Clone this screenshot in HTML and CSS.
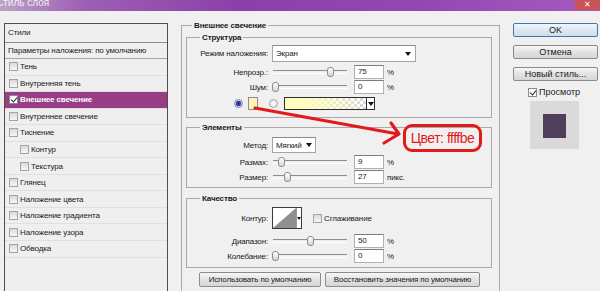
FILE: index.html
```html
<!DOCTYPE html>
<html lang="ru">
<head>
    <meta charset="UTF-8">
    <meta name="viewport" content="width=device-width, initial-scale=1.0">
    <title>Стиль слоя</title>
    <link rel="stylesheet" href="styles.css">
</head>
<body>
    <div class="titlebar">
        <span class="title-text">Стиль слоя</span>
        <span class="close-btn">✕</span>
    </div>

    <div class="dialog">
        <div class="styles-panel">
            <div class="panel-head">Стили</div>
            <div class="panel-blend">Параметры наложения: по умолчанию</div>
            <div class="panel-row"><span class="cb"></span>Тень</div>
            <div class="panel-row"><span class="cb"></span>Внутренняя тень</div>
            <div class="panel-row selected"><span class="cb on"></span>Внешнее свечение</div>
            <div class="panel-row"><span class="cb"></span>Внутреннее свечение</div>
            <div class="panel-row"><span class="cb"></span>Тиснение</div>
            <div class="panel-row sub"><span class="cb"></span>Контур</div>
            <div class="panel-row sub"><span class="cb"></span>Текстура</div>
            <div class="panel-row"><span class="cb"></span>Глянец</div>
            <div class="panel-row"><span class="cb"></span>Наложение цвета</div>
            <div class="panel-row"><span class="cb"></span>Наложение градиента</div>
            <div class="panel-row"><span class="cb"></span>Наложение узора</div>
            <div class="panel-row"><span class="cb"></span>Обводка</div>
        </div>

        <div class="settings">
            <fieldset class="group outer">
                <legend>Внешнее свечение</legend>

                <fieldset class="group structure">
                    <legend>Структура</legend>
                    <div class="row select-row">
                        <span class="lbl">Режим наложения:</span>
                        <div class="select blend-mode">Экран<span class="caret"></span></div>
                    </div>
                    <div class="row slider-row first">
                        <span class="lbl">Непрозр.:</span>
                        <div class="slider"><span class="thumb" style="left: 55px"></span></div>
                        <div class="field">75</div>
                        <span class="unit">%</span>
                    </div>
                    <div class="row slider-row">
                        <span class="lbl">Шум:</span>
                        <div class="slider"><span class="thumb" style="left: 0px"></span></div>
                        <div class="field">0</div>
                        <span class="unit">%</span>
                    </div>
                    <div class="row color-row">
                        <span class="radio on"></span>
                        <span class="swatch"></span>
                        <span class="radio"></span>
                        <div class="gradient-pick"><span class="gradient-fill"></span><span class="gradient-arrow"><span class="caret"></span></span></div>
                    </div>
                </fieldset>

                <fieldset class="group elements">
                    <legend>Элементы</legend>
                    <div class="row method-row">
                        <span class="lbl">Метод:</span>
                        <div class="select method">Мягкий<span class="caret"></span></div>
                    </div>
                    <div class="row slider-row first">
                        <span class="lbl">Размах:</span>
                        <div class="slider"><span class="thumb" style="left: 6px"></span></div>
                        <div class="field">9</div>
                        <span class="unit">%</span>
                    </div>
                    <div class="row slider-row">
                        <span class="lbl">Размер:</span>
                        <div class="slider"><span class="thumb" style="left: 12px"></span></div>
                        <div class="field">27</div>
                        <span class="unit">пикс.</span>
                    </div>
                </fieldset>

                <fieldset class="group quality">
                    <legend>Качество</legend>
                    <div class="row contour-row">
                        <span class="lbl">Контур:</span>
                        <div class="contour-pick">
                            <svg width="23" height="20" viewBox="0 0 23 20">
                                <rect x="0" y="0" width="23" height="20" fill="#fff"/>
                                <polygon points="0,20 23,0 23,20" fill="#8f8f8f"/>
                            </svg>
                            <span class="contour-arrow"><span class="caret small"></span></span>
                        </div>
                        <span class="cb smooth"></span>
                        <span class="smooth-label">Сглаживание</span>
                    </div>
                    <div class="row slider-row spaced">
                        <span class="lbl">Диапазон:</span>
                        <div class="slider"><span class="thumb" style="left: 35px"></span></div>
                        <div class="field">50</div>
                        <span class="unit">%</span>
                    </div>
                    <div class="row slider-row">
                        <span class="lbl">Колебание:</span>
                        <div class="slider"><span class="thumb" style="left: 0px"></span></div>
                        <div class="field">0</div>
                        <span class="unit">%</span>
                    </div>
                </fieldset>

                <div class="defaults">
                    <button class="btn use-default">Использовать по умолчанию</button>
                    <button class="btn reset-default">Восстановить значения по умолчанию</button>
                </div>
            </fieldset>
        </div>

        <div class="actions">
            <button class="btn action primary">OK</button>
            <button class="btn action">Отмена</button>
            <button class="btn action">Новый стиль...</button>
            <div class="preview-toggle"><span class="cb on"></span>Просмотр</div>
            <div class="preview"><div class="preview-swatch"></div></div>
        </div>
    </div>

    <!-- red annotation drawn over the dialog -->
    <svg class="annotation" width="600" height="291" viewBox="0 0 600 291">
        <g fill="none" stroke="#e41a1a" stroke-width="3.2" stroke-linecap="round" stroke-linejoin="round">
            <line x1="255" y1="108" x2="398" y2="134"/>
            <polyline points="391,123 399,134 384,143"/>
        </g>
    </svg>
    <div class="callout">Цвет: ffffbe</div>
</body>
</html>
```

FILE: styles.css
```css
* {
    box-sizing: border-box;
}

html,
body {
    margin: 0;
}

body {
    position: relative;
    width: 600px;
    height: 291px;
    overflow: hidden;
    background-color: #f0f0f0;
    font-family: 'Liberation Sans', Arial, sans-serif;
    font-size: 8px;
    letter-spacing: -0.15px;
    color: #1a1a1a;
    white-space: nowrap;
}

/* window title */

.titlebar {
    display: flex;
    justify-content: space-between;
    height: 11px;
    overflow: hidden;
    background: linear-gradient(90deg, #bba3c6 0%, #9d5fb4 14%, #8b40a9 40%, #9447b1 70%, #a55ac0 100%);
}

.title-text {
    margin: -3px 0 0 -4px;
    color: #f4eef8;
    font-size: 10px;
    line-height: 12px;
    letter-spacing: 0;
}

.close-btn {
    width: 25px;
    height: 10px;
    background-color: #c85457;
    color: #fff;
    font-size: 8px;
    line-height: 9px;
    text-align: center;
}

.dialog {
    display: flex;
    align-items: flex-start;
}

/* styles list */

.styles-panel {
    width: 164px;
    height: 290px;
    margin: 12px 0 0 4px;
    border: 1px solid #4e4e4e;
    background-color: #efefef;
}

.panel-head {
    height: 19px;
    padding-left: 3px;
    border-bottom: 1px solid #8c8c8c;
    line-height: 18px;
}

.panel-blend {
    height: 16px;
    padding-left: 3px;
    border-bottom: 1px solid #a8a8a8;
    line-height: 15px;
}

.panel-row {
    display: flex;
    align-items: center;
    height: 16.55px;
    padding-left: 4px;
    border-bottom: 1px solid #e0e0e0;
}

.panel-row.sub {
    padding-left: 15px;
}

.panel-row.selected {
    background-color: #983d86;
    color: #fff;
    font-weight: bold;
}

.cb {
    position: relative;
    flex: none;
    width: 9px;
    height: 9px;
    margin-right: 2px;
    border: 1px solid #a3a3a3;
    background: linear-gradient(#d9d9d9, #f7f7f7);
}

.cb.on {
    border-color: #8a8a8a;
    background: #fff;
}

.cb.on::after {
    content: "";
    position: absolute;
    left: 2px;
    top: 0;
    width: 3px;
    height: 5px;
    border: solid #2b2b2b;
    border-width: 0 1.5px 1.5px 0;
    transform: rotate(40deg);
}

/* group boxes */

.settings {
    margin: 9px 0 0 13px;
}

.group {
    margin: 0;
    padding: 0;
    border: 1px solid #a9a9a9;
}

.group legend {
    padding: 0 2px;
    margin-left: 13px;
    font-weight: bold;
    line-height: 11px;
}

.group.outer {
    width: 319px;
    min-height: 290px;
    padding: 0 7px 0 4px;
}

.group.outer > legend {
    margin-left: 6px;
}

.structure {
    margin-top: 1px;
    padding: 2px 0 7px;
}

.elements {
    margin-top: 4px;
    padding: 4px 0 3px;
}

.quality {
    margin-top: 5px;
    padding: 3px 0 4px;
}

.row {
    display: flex;
    align-items: center;
}

.lbl {
    flex: none;
    width: 81px;
    margin-right: 4px;
    text-align: right;
}

.select-row {
    height: 17px;
}

.slider-row {
    height: 14px;
    margin-top: 1px;
}

.slider-row.first {
    margin-top: 3px;
}

.elements .slider-row.first {
    margin-top: 2px;
}

.slider-row.spaced {
    margin-top: 5px;
}

.select {
    position: relative;
    display: flex;
    align-items: center;
    justify-content: space-between;
    height: 100%;
    padding: 0 4px 0 3px;
    border: 1px solid #a4a4a4;
    border-top-color: #8a8a8a;
    background-color: #fff;
}

.blend-mode {
    width: 144px;
}

.method-row {
    height: 16px;
}

.method {
    width: 44px;
    padding-right: 3px;
}

.caret {
    width: 0;
    height: 0;
    border-left: 3.5px solid transparent;
    border-right: 3.5px solid transparent;
    border-top: 4px solid #111;
}

.caret.small {
    border-left-width: 2.5px;
    border-right-width: 2.5px;
    border-top-width: 3px;
}

.slider {
    position: relative;
    flex: none;
    width: 76px;
    height: 14px;
    display: flex;
    align-items: center;
    padding: 0 1px;
}

.slider::before {
    content: "";
    flex: 1;
    height: 2px;
    border-top: 1px solid #8d8d8d;
    border-bottom: 1px solid #fff;
}

.thumb {
    position: absolute;
    top: 2px;
    width: 7px;
    height: 10px;
    border: 1px solid #8c8c8c;
    border-radius: 3px;
    background: linear-gradient(#ffffff, #d6d6d6);
}

.field {
    flex: none;
    width: 30px;
    height: 14px;
    margin-left: 6px;
    padding-left: 3px;
    border: 1px solid #b0b0b0;
    border-top-color: #7c7c7c;
    background-color: #fff;
    line-height: 12px;
}

.unit {
    margin-left: 3px;
}

/* colour choice */

.color-row {
    height: 13px;
    margin-top: 3px;
    padding-left: 47px;
}

.radio {
    flex: none;
    width: 9px;
    height: 9px;
    border: 1px solid #a5a5a5;
    border-radius: 50%;
    background: radial-gradient(#ffffff, #dcdcdc);
}

.radio.on {
    border-color: #7e86b8;
    background: radial-gradient(circle, #2a2c7c 0, #3c3f94 45%, #c7cdea 60%);
}

.swatch {
    flex: none;
    width: 10px;
    height: 13px;
    margin: 0 11px 0 5px;
    border: 1px solid #8e8e8e;
    background-color: #fff4b4;
}

.gradient-pick {
    display: flex;
    width: 91px;
    height: 13px;
    margin-left: 6px;
    border: 1px solid #2e2e2e;
    background-color: #fff;
}

.gradient-fill {
    flex: 1;
    background:
        linear-gradient(90deg, #ffffbe 0%, #ffffbe 20%, rgba(255, 255, 190, 0) 100%),
        repeating-conic-gradient(#d8d8d8 0 25%, #ffffff 0 50%) 0 0 / 6px 6px;
}

.gradient-arrow {
    display: flex;
    align-items: center;
    justify-content: center;
    width: 8px;
    border-left: 1px solid #2e2e2e;
}

/* contour */

.contour-row {
    height: 22px;
}

.contour-pick {
    display: flex;
    width: 30px;
    height: 22px;
    border: 1px solid #3a3a3a;
    background-color: #fff;
}

.contour-pick svg {
    display: block;
}

.contour-arrow {
    display: flex;
    align-items: center;
    justify-content: center;
    flex: 1;
    border-left: 1px solid #9a9a9a;
}

.cb.smooth {
    margin-left: 11px;
    margin-right: 2px;
}

/* buttons */

.btn {
    display: block;
    padding: 0;
    border: 1px solid #8b8b8b;
    border-radius: 2px;
    background: linear-gradient(#f7f7f7, #e2e2e2 50%, #d6d6d6);
    font-family: 'Liberation Sans', Arial, sans-serif;
    font-size: 8px;
    letter-spacing: -0.15px;
    color: #1a1a1a;
    line-height: 13px;
    white-space: nowrap;
}

.defaults {
    display: flex;
    gap: 4px;
    margin-top: 4px;
    padding-left: 13px;
}

.defaults .btn {
    height: 15px;
}

.use-default {
    width: 122px;
}

.reset-default {
    width: 155px;
}

.actions {
    display: flex;
    flex-direction: column;
    width: 85px;
    margin: 12px 0 0 13px;
}

.btn.action {
    height: 14px;
    font-size: 9px;
    letter-spacing: 0;
    line-height: 12px;
}

.btn.action + .btn.action {
    margin-top: 8px;
}

.btn.action:nth-child(3) {
    margin-top: 7px;
}

.btn.primary {
    border-color: #3c78b4;
    background: linear-gradient(#f2f7fb, #dde8f2 50%, #cfdeec);
}

.preview-toggle {
    display: flex;
    align-items: center;
    height: 10px;
    margin: 6px 0 0 15px;
    font-size: 9px;
    letter-spacing: 0;
}

.preview-toggle .cb {
    margin-right: 2px;
}

.preview {
    width: 49px;
    height: 48px;
    margin: 4px 0 0 17px;
    padding: 13px;
    background-color: #dadada;
}

.preview-swatch {
    width: 23px;
    height: 24px;
    background-color: #4f3f5c;
}

/* annotation */

.annotation {
    position: absolute;
    left: 0;
    top: 0;
    pointer-events: none;
}

.callout {
    position: absolute;
    left: 403px;
    top: 124px;
    width: 79px;
    height: 28px;
    border: 3px solid #e41a1a;
    border-radius: 9px;
    color: #e41a1a;
    font-size: 14px;
    letter-spacing: -0.5px;
    line-height: 22px;
    text-align: center;
}
```
